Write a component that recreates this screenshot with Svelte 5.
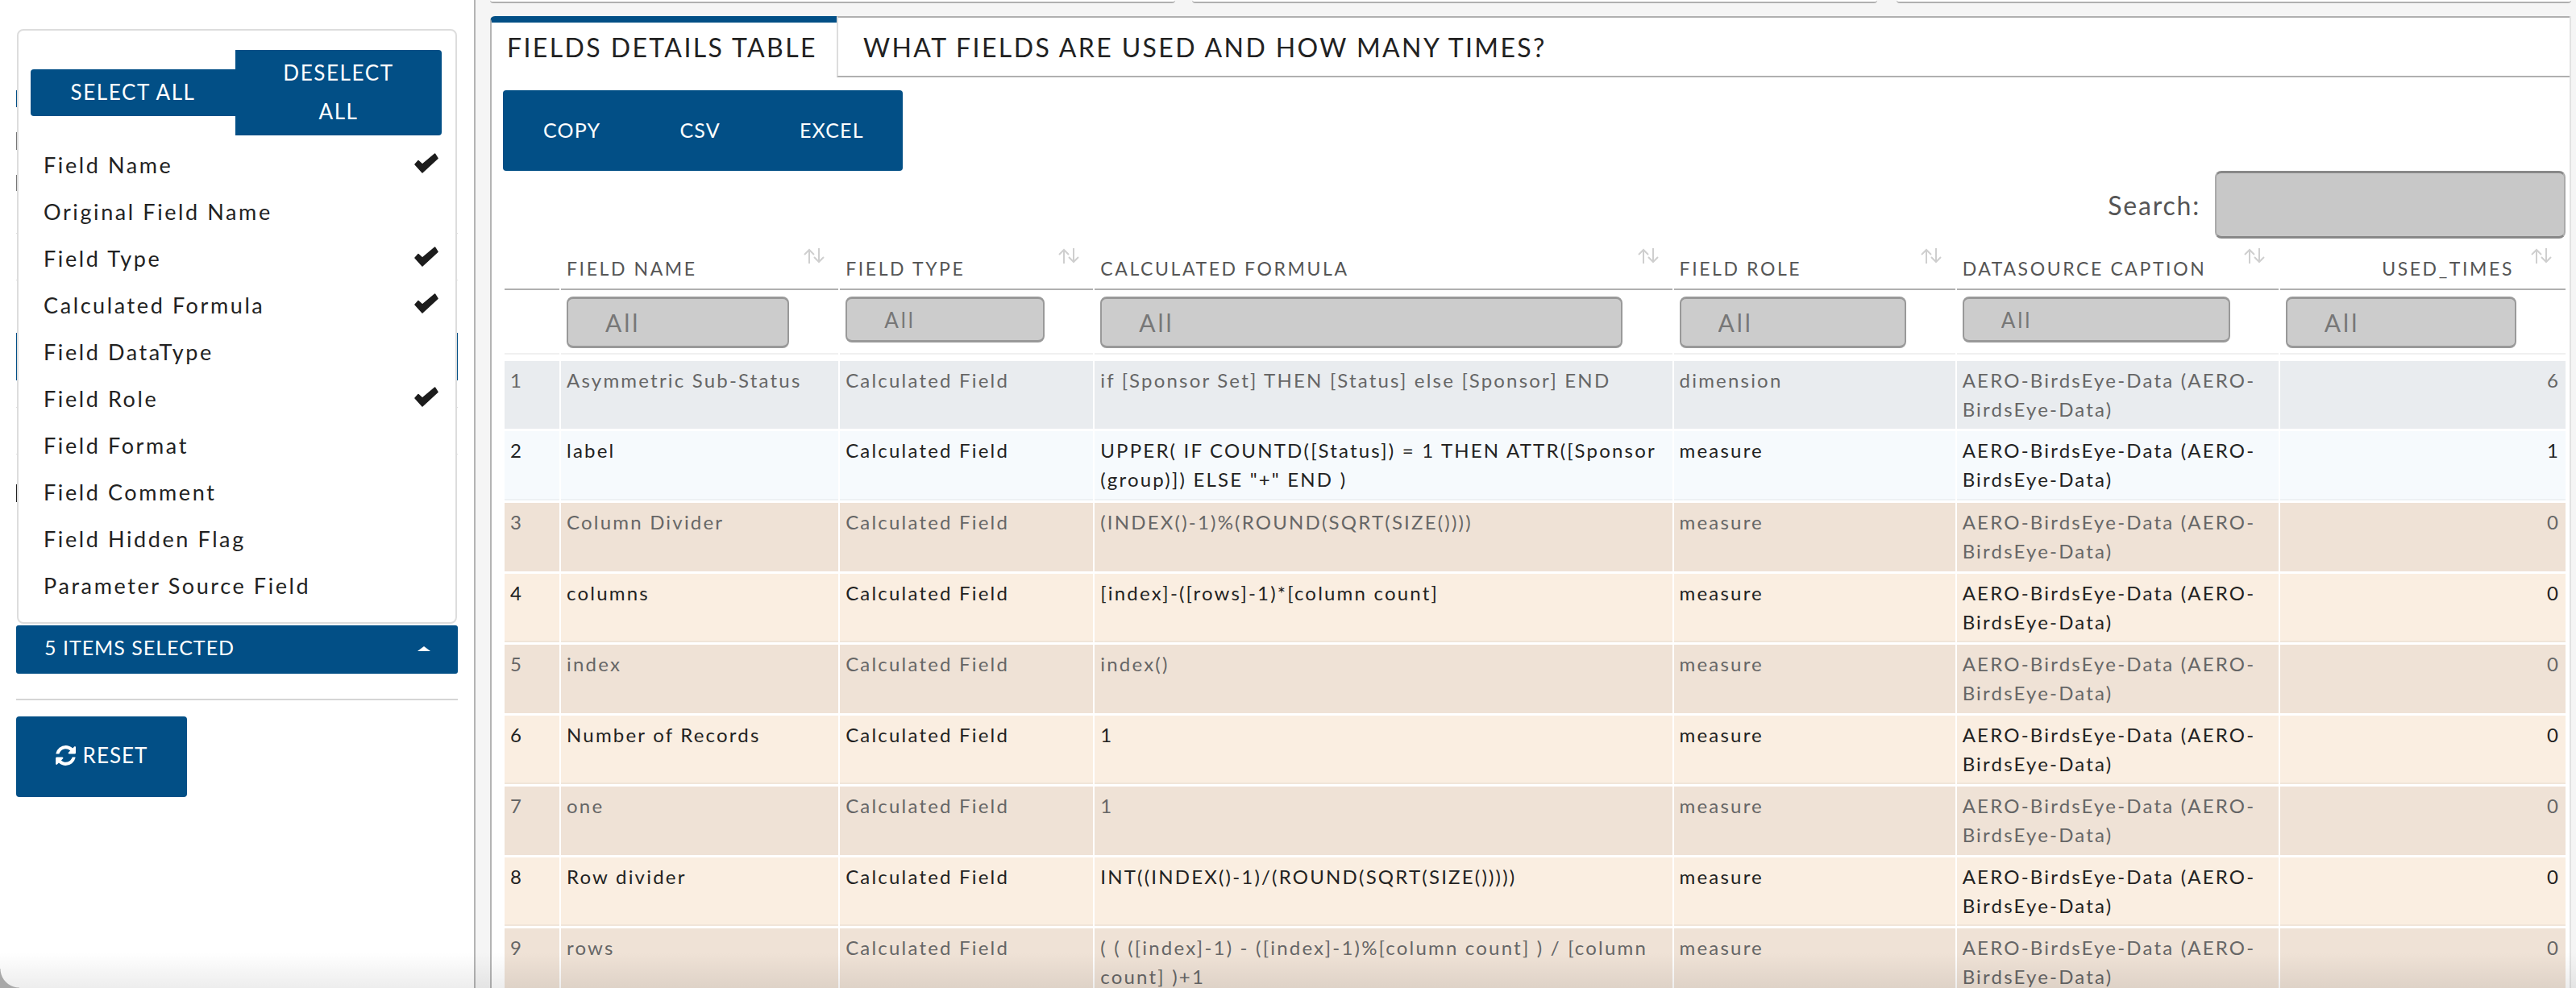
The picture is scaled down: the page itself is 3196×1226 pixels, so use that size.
<script>
  const options = [
    { label: 'Field Name', on: true },
    { label: 'Original Field Name', on: false },
    { label: 'Field Type', on: true },
    { label: 'Calculated Formula', on: true },
    { label: 'Field DataType', on: false },
    { label: 'Field Role', on: true },
    { label: 'Field Format', on: false },
    { label: 'Field Comment', on: false },
    { label: 'Field Hidden Flag', on: false },
    { label: 'Parameter Source Field', on: false }
  ];

  // what sticks out behind the open dropdown: gap above, height, kind
  const slivers = [
    { gap: 112, h: 21, kind: 'blue short' },
    { gap: 31, h: 22, kind: 'grey short' },
    { gap: 31, h: 20, kind: 'grey short' },
    { gap: 52, h: 1, kind: 'hair' },
    { gap: 57, h: 1, kind: 'hair' },
    { gap: 65, h: 59, kind: 'blue' },
    { gap: 33, h: 1, kind: 'hair' },
    { gap: 57, h: 1, kind: 'hair' },
    { gap: 37, h: 22, kind: 'dark short' }
  ];

  const columns = [
    { name: '', width: 68 },
    { name: 'FIELD NAME', width: 344, filter: 276, size: 'lg' },
    { name: 'FIELD TYPE', width: 314, filter: 247, size: 'sm' },
    { name: 'CALCULATED FORMULA', width: 716, filter: 648, size: 'lg' },
    { name: 'FIELD ROLE', width: 349, filter: 281, size: 'lg' },
    { name: 'DATASOURCE CAPTION', width: 399, filter: 332, size: 'sm' },
    { name: 'USED_TIMES', width: 354, filter: 286, size: 'lg', right: true }
  ];

  const source = 'AERO-BirdsEye-Data (AERO-BirdsEye-Data)';
  const rows = [
    ['Asymmetric Sub-Status', 'if [Sponsor Set] THEN [Status] else [Sponsor] END', 'dimension', 6, 'cool'],
    ['label', 'UPPER( IF COUNTD([Status]) = 1 THEN ATTR([Sponsor (group)]) ELSE "+" END )', 'measure', 1, 'cool'],
    ['Column Divider', '(INDEX()-1)%(ROUND(SQRT(SIZE())))', 'measure', 0, 'warm'],
    ['columns', '[index]-([rows]-1)*[column count]', 'measure', 0, 'warm'],
    ['index', 'index()', 'measure', 0, 'warm'],
    ['Number of Records', '1', 'measure', 0, 'warm'],
    ['one', '1', 'measure', 0, 'warm'],
    ['Row divider', 'INT((INDEX()-1)/(ROUND(SQRT(SIZE()))))', 'measure', 0, 'warm'],
    ['rows', '( ( ([index]-1) - ([index]-1)%[column count] ) / [column count] )+1', 'measure', 0, 'warm']
  ];
</script>

<div class="page">
  <aside class="sidebar">
    <div class="picker">
      <div class="under">
        {#each slivers as s}
          <div class={'sliver ' + s.kind} style="margin-top: {s.gap}px; height: {s.h}px"></div>
        {/each}
      </div>

      <div class="dropdown">
        <div class="bulk">
          <button class="btn select">SELECT ALL</button>
          <button class="btn deselect">DESELECT ALL</button>
        </div>
        <ul>
          {#each options as o}
            <li>
              <span>{o.label}</span>
              {#if o.on}
                <svg class="tick" viewBox="0 0 30 25" width="30" height="25">
                  <path d="M1 14 5 9.5 10 14 25.5 1 29 6.5 10 24z" fill="#1c1c1c" stroke="#1c1c1c" stroke-width="1.5" stroke-linejoin="round" />
                </svg>
              {/if}
            </li>
          {/each}
        </ul>
      </div>
    </div>

    <div class="count">
      <span>5 ITEMS SELECTED</span>
      <i class="caret"></i>
    </div>
    <hr />
    <button class="btn reset">
      <svg viewBox="121 140 1543 1512" width="25" height="25" fill="#fff">
        <path d="M1639 1056q0 5-1 7-64 268-268 434.5t-478 166.5q-146 0-282.5-55t-243.5-157l-129 129q-19 19-45 19t-45-19-19-45v-448q0-26 19-45t45-19h448q26 0 45 19t19 45-19 45l-137 137q71 66 161 102t187 36q134 0 250-65t186-179q11-17 53-117 8-23 30-23h192q13 0 22.5 9.5t9.5 22.5zm25-800v448q0 26-19 45t-45 19h-448q-26 0-45-19t-19-45 19-45l138-138q-148-137-349-137-134 0-250 65t-186 179q-11 17-53 117-8 23-30 23h-199q-13 0-22.5-9.5t-9.5-22.5v-7q65-268 270-434.5t480-166.5q146 0 284 55.5t245 156.5l130-129q19-19 45-19t45 19 19 45z" />
      </svg>
      RESET
    </button>
  </aside>

  <main class="main">
    <div class="cards">
      <div class="card"></div>
      <div class="card"></div>
      <div class="card last"></div>
    </div>

    <section class="panel">
      <nav class="tabs">
        <div class="tab active">FIELDS DETAILS TABLE</div>
        <div class="tab">WHAT FIELDS ARE USED AND HOW MANY TIMES?</div>
      </nav>

      <div class="body">
        <div class="exports">
          <button class="btn">COPY</button>
          <button class="btn">CSV</button>
          <button class="btn">EXCEL</button>
        </div>

        <label class="search">
          Search:
          <input type="text" />
        </label>

        <table>
          <colgroup>
            {#each columns as c}
              <col style="width: {c.width}px" />
            {/each}
          </colgroup>
          <thead>
            <tr class="heads">
              {#each columns as c}
                <th class:right={c.right}>
                  <span class="head-text">{c.name}</span>
                  {#if c.name}
                    <svg class="sort" viewBox="0 0 28 19" width="28" height="19" fill="none" stroke="#cfcfcf" stroke-width="2">
                      <path d="M8 19V2M2 8l6-6 6 6M20 0v17M14 11l6 6 6-6" />
                    </svg>
                  {/if}
                </th>
              {/each}
            </tr>
            <tr class="filters">
              {#each columns as c}
                <td>
                  {#if c.filter}
                    <input class={c.size} style="width: {c.filter}px" placeholder="All" />
                  {/if}
                </td>
              {/each}
            </tr>
            <tr class="spacer"><td colspan="7"></td></tr>
          </thead>
          <tbody>
            {#each rows as r, i}
              <tr class={r[4]}>
                <td>{i + 1}</td>
                <td>{r[0]}</td>
                <td>Calculated Field</td>
                <td>{r[1]}</td>
                <td>{r[2]}</td>
                <td>{source}</td>
                <td class="right">{r[3]}</td>
              </tr>
            {/each}
          </tbody>
        </table>
      </div>
    </section>
  </main>

  <div class="fade"></div>
  <div class="corner"></div>
</div>

<style>
  :global(body) {
    margin: 0;
    background: #fff;
  }

  .page {
    position: relative;
    display: flex;
    width: 3196px;
    height: 1226px;
    overflow: hidden;
    font-family: Lato, "Liberation Sans", sans-serif;
    color: #222;
  }

  .btn {
    display: block;
    border: 0;
    padding: 0;
    background: #024f86;
    color: #fff;
    font: inherit;
    font-size: 26px;
    letter-spacing: 1.6px;
  }

  /* Sidebar */
  .sidebar {
    box-sizing: border-box;
    flex: 0 0 590px;
    padding-left: 20px;
    background: #fff;
    border-right: 2px solid #b4b4b4;
  }

  .picker {
    position: relative;
    width: 548px;
    height: 776px;
  }

  .under {
    display: flex;
    flex-direction: column;
  }

  .sliver.blue { background: #024f86; }
  .sliver.grey { background: #777; }
  .sliver.dark { background: #222; }
  .sliver.hair { background: #ddd; }
  .sliver.short { width: 20px; }

  .dropdown {
    position: absolute;
    top: 36px;
    left: 1px;
    box-sizing: border-box;
    width: 546px;
    height: 738px;
    padding: 24px 0 0 15px;
    background: #fff;
    border: 2px solid #ddd;
    border-radius: 8px;
  }

  .bulk {
    display: flex;
    align-items: center;
  }

  .select {
    width: 254px;
    height: 58px;
    padding-bottom: 3px;
    border-radius: 4px 0 0 4px;
  }

  .deselect {
    width: 256px;
    height: 106px;
    padding: 0 50px 3px;
    line-height: 48px;
    border-radius: 0 4px 4px 0;
  }

  ul {
    margin: 7px 0 0;
    padding: 0;
    list-style: none;
  }

  li {
    display: flex;
    align-items: center;
    justify-content: space-between;
    box-sizing: border-box;
    width: 511px;
    height: 58px;
    padding: 0 5px 0 16px;
    font-size: 27px;
    letter-spacing: 2.6px;
    color: #222;
  }

  .tick {
    margin-top: -4px;
  }

  .count {
    display: flex;
    align-items: center;
    justify-content: space-between;
    box-sizing: border-box;
    width: 548px;
    height: 60px;
    padding: 0 34px 6px 35px;
    background: #024f86;
    border-radius: 3px;
    color: #fff;
    font-size: 25px;
    letter-spacing: 1px;
  }

  .caret {
    width: 0;
    height: 0;
    margin-top: 4px;
    border-left: 8px solid transparent;
    border-right: 8px solid transparent;
    border-bottom: 6px solid #fff;
  }

  hr {
    width: 548px;
    height: 2px;
    margin: 31px 0 20px;
    border: 0;
    background: #d5d5d5;
  }

  .reset {
    display: flex;
    align-items: center;
    justify-content: center;
    gap: 9px;
    width: 212px;
    height: 100px;
    padding-bottom: 4px;
    border-radius: 4px;
    letter-spacing: 1px;
  }

  /* Main */
  .main {
    flex: 1;
    min-width: 0;
    padding: 0 6px 0 18px;
    background: #f5f5f5;
  }

  .cards {
    display: flex;
    gap: 21px;
    height: 4px;
  }

  .card {
    flex: 0 0 850px;
    background: #fff;
    border-bottom: 2px solid #b0b0b0;
    border-radius: 0 0 6px 6px;
  }

  .card.last {
    flex: 1;
    margin-left: 3px;
  }

  .panel {
    margin-top: 16px;
    height: 1300px;
    background: #fff;
    border-left: 2px solid #b4b4b4;
    border-right: 2px solid #e2e2e2;
    border-radius: 6px 0 0 0;
  }

  .tabs {
    display: flex;
    height: 76px;
    margin-left: -2px;
  }

  .tab {
    flex: 1;
    box-sizing: border-box;
    padding: 17px 0 0 31px;
    border-top: 2px solid #b0b0b0;
    border-bottom: 2px solid #b0b0b0;
    border-left: 2px solid #ddd;
    font-size: 32px;
    line-height: 40px;
    letter-spacing: 2.4px;
    color: #222;
  }

  .tab.active {
    flex: 0 0 430px;
    padding: 11px 0 0 19px;
    border-top: 8px solid #024f86;
    border-bottom: 0;
    border-left: 2px solid #b4b4b4;
    border-radius: 6px 0 0 0;
  }

  .body {
    padding: 16px 0 0 14px;
  }

  .exports {
    display: flex;
    width: 496px;
    height: 100px;
    background: #024f86;
    border-radius: 4px;
  }

  .exports .btn {
    padding: 0 48px 3px 50px;
    background: transparent;
    font-size: 25px;
    letter-spacing: 1.2px;
  }

  .search {
    display: flex;
    align-items: center;
    justify-content: flex-end;
    gap: 18px;
    width: 2559px;
    height: 84px;
    color: #555;
    font-size: 32px;
    letter-spacing: 1.8px;
  }

  .search input {
    box-sizing: border-box;
    width: 435px;
    height: 84px;
    background: #c8c8c8;
    border: 2px solid #999;
    border-width: 3px 2px;
    border-color: #888 #aaa #888;
    border-radius: 8px;
  }

  /* Table */
  table {
    table-layout: fixed;
    width: 2561px;
    border-collapse: separate;
    border-spacing: 2px 0;
    font-size: 24px;
  }

  .heads th {
    position: relative;
    box-sizing: border-box;
    height: 64px;
    padding: 0 7px 10px;
    border-bottom: 2px solid #b0b0b0;
    vertical-align: bottom;
    text-align: left;
    font-weight: 400;
    font-size: 23px;
    line-height: 30px;
    letter-spacing: 2.6px;
    color: #555;
  }

  .heads th.right {
    padding-right: 64px;
    text-align: right;
  }

  .sort {
    position: absolute;
    top: 12px;
    right: 16px;
  }

  .filters td {
    box-sizing: border-box;
    height: 80px;
    padding: 8px 0 0 7px;
    border-bottom: 2px solid #f0f0f0;
    vertical-align: top;
  }

  .filters input {
    display: block;
    box-sizing: border-box;
    padding: 0 0 0 46px;
    background: #ccc;
    border: 2px solid #999;
    border-width: 3px 2px;
    border-radius: 8px;
    font-family: inherit;
    letter-spacing: 3px;
    outline: 0;
  }

  .filters input::placeholder {
    color: #777;
    opacity: 1;
  }

  .filters .lg {
    height: 64px;
    font-size: 30px;
  }

  .filters .sm {
    height: 57px;
    font-size: 26px;
  }

  .spacer td {
    height: 8px;
    padding: 0;
  }

  tbody td {
    box-sizing: border-box;
    height: 88px;
    padding: 6px 7px 0;
    border-bottom: 3px solid #fff;
    background-clip: padding-box;
    vertical-align: top;
    line-height: 36px;
    letter-spacing: 2.2px;
    overflow-wrap: break-word;
  }

  tbody tr:nth-child(1) td { height: 87px; }
  tbody tr:nth-child(2) td { height: 89px; }

  tbody td.right { text-align: right; }

  tbody tr.cool:nth-child(odd) td { background-color: #e9ecef; color: #666; }
  tbody tr.cool:nth-child(even) td { background-color: #f6fafd; color: #222; box-shadow: inset 0 -2px 0 #edf1f4; }
  tbody tr.warm:nth-child(odd) td { background-color: #efe2d6; color: #666; }
  tbody tr.warm:nth-child(even) td { background-color: #faeee1; color: #222; box-shadow: inset 0 -2px 0 #f0e5d9; }

  /* Window edge */
  .fade {
    position: absolute;
    left: 0;
    right: 0;
    bottom: 0;
    height: 44px;
    background: linear-gradient(rgba(0, 0, 0, 0), rgba(0, 0, 0, 0.07));
    pointer-events: none;
  }

  .corner {
    position: absolute;
    left: 0;
    bottom: 0;
    width: 24px;
    height: 24px;
    background: radial-gradient(circle at 100% 0, transparent 23px, #a8a8a8 24px);
    pointer-events: none;
  }
</style>
